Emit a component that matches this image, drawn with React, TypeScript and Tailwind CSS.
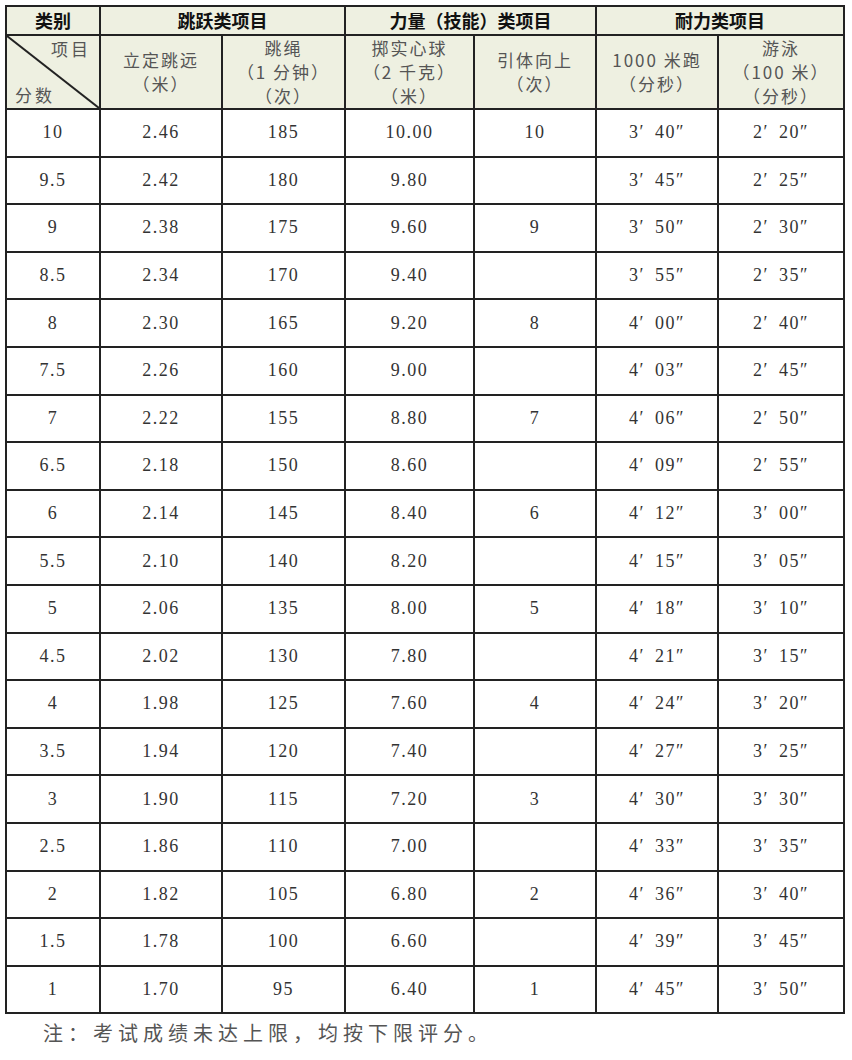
const rows: string[][] = [
  ['10', '2.46', '185', '10.00', '10', '3′ 40″', '2′ 20″'],
  ['9.5', '2.42', '180', '9.80', '', '3′ 45″', '2′ 25″'],
  ['9', '2.38', '175', '9.60', '9', '3′ 50″', '2′ 30″'],
  ['8.5', '2.34', '170', '9.40', '', '3′ 55″', '2′ 35″'],
  ['8', '2.30', '165', '9.20', '8', '4′ 00″', '2′ 40″'],
  ['7.5', '2.26', '160', '9.00', '', '4′ 03″', '2′ 45″'],
  ['7', '2.22', '155', '8.80', '7', '4′ 06″', '2′ 50″'],
  ['6.5', '2.18', '150', '8.60', '', '4′ 09″', '2′ 55″'],
  ['6', '2.14', '145', '8.40', '6', '4′ 12″', '3′ 00″'],
  ['5.5', '2.10', '140', '8.20', '', '4′ 15″', '3′ 05″'],
  ['5', '2.06', '135', '8.00', '5', '4′ 18″', '3′ 10″'],
  ['4.5', '2.02', '130', '7.80', '', '4′ 21″', '3′ 15″'],
  ['4', '1.98', '125', '7.60', '4', '4′ 24″', '3′ 20″'],
  ['3.5', '1.94', '120', '7.40', '', '4′ 27″', '3′ 25″'],
  ['3', '1.90', '115', '7.20', '3', '4′ 30″', '3′ 30″'],
  ['2.5', '1.86', '110', '7.00', '', '4′ 33″', '3′ 35″'],
  ['2', '1.82', '105', '6.80', '2', '4′ 36″', '3′ 40″'],
  ['1.5', '1.78', '100', '6.60', '', '4′ 39″', '3′ 45″'],
  ['1', '1.70', '95', '6.40', '1', '4′ 45″', '3′ 50″'],
];

function Cell({ value }: { value: string }) {
  // 时间列拆成分、秒两段，中间留空
  if (value.includes('′')) {
    const [m, s] = value.split(' ');
    return (
      <span>
        {m}
        <span className="ml-[10px]">{s}</span>
      </span>
    );
  }
  return <span>{value}</span>;
}

export default function App() {
  const th1 = 'border-2 border-[#222] bg-[#eef0e1] text-[18px] font-bold text-[#111] text-center';
  const th2 = 'border-2 border-[#222] bg-[#eef0e1] text-[17px] leading-[24px] tracking-[2px] text-[#555] text-center align-middle font-normal';
  const td = 'border-2 border-[#222] text-center text-[18px] text-[#333] tracking-[1.5px]';

  return (
    <div className="w-[852px] h-[1060px] bg-white pt-[5px] pl-[5px] font-['Liberation_Serif','Noto_Sans_CJK_SC',serif]">
      <table className="w-[838px] table-fixed border-collapse">
        <colgroup>
          <col className="w-[94px]" />
          <col className="w-[122px]" />
          <col className="w-[123px]" />
          <col className="w-[129px]" />
          <col className="w-[122px]" />
          <col className="w-[122px]" />
          <col className="w-[126px]" />
        </colgroup>
        <thead className="font-['Noto_Sans_CJK_SC',sans-serif]">
          <tr className="h-[27px]">
            <th className={th1}>类别</th>
            <th className={th1} colSpan={2}>跳跃类项目</th>
            <th className={th1} colSpan={2}>力量（技能）类项目</th>
            <th className={th1} colSpan={2}>耐力类项目</th>
          </tr>
          <tr className="h-[73px]">
            <th className="border-2 border-[#222] bg-[#eef0e1] p-0 relative font-normal text-[17px] text-[#555] tracking-[3px]">
              <svg className="absolute inset-0 w-full h-full" preserveAspectRatio="none" viewBox="0 0 100 100">
                <line x1="0" y1="0" x2="100" y2="100" stroke="#222" strokeWidth="2" vectorEffect="non-scaling-stroke" />
              </svg>
              <div className="flex flex-col h-[71px] justify-between px-[8px] pt-[2px] pb-[3px]">
                <div className="text-right leading-[20px]">项目</div>
                <div className="text-left leading-[20px]">分数</div>
              </div>
            </th>
            <th className={th2}>
              立定跳远
              <br />
              （米）
            </th>
            <th className={th2}>
              跳绳
              <br />
              （1 分钟）
              <br />
              （次）
            </th>
            <th className={th2}>
              掷实心球
              <br />
              （2 千克）
              <br />
              （米）
            </th>
            <th className={th2}>
              引体向上
              <br />
              （次）
            </th>
            <th className={th2}>
              1000 米跑
              <br />
              （分秒）
            </th>
            <th className={th2}>
              游泳
              <br />
              （100 米）
              <br />
              （分秒）
            </th>
          </tr>
        </thead>
        <tbody>
          {rows.map((r, i) => (
            <tr key={i} className="h-[47.6px]">
              {r.map((v, j) => (
                <td key={j} className={td}>
                  <Cell value={v} />
                </td>
              ))}
            </tr>
          ))}
        </tbody>
      </table>
      <p className="mt-[4px] pl-[38px] text-[20px] tracking-[5px] text-[#555] font-['Noto_Sans_CJK_SC',sans-serif] leading-[30px]">
        注：考试成绩未达上限，均按下限评分。
      </p>
    </div>
  );
}
